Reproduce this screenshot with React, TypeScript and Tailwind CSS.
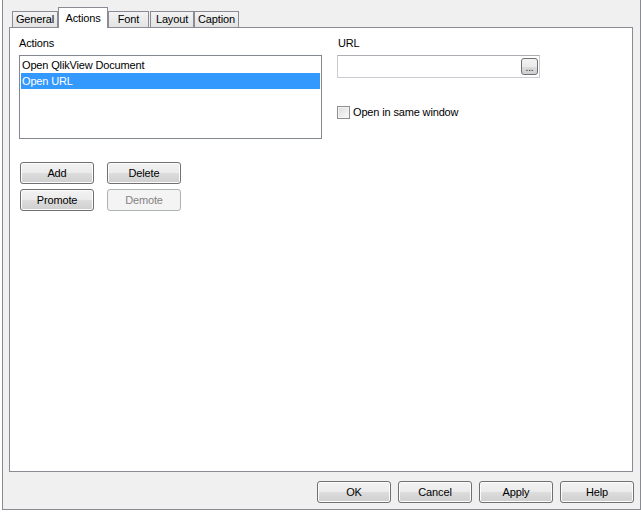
import React from 'react';

const btnBase =
  'w-[74px] h-[22px] rounded-[3px] border flex items-center justify-center text-[11px] leading-none';
const btnOn =
  'border-[#707070] text-black bg-[linear-gradient(to_bottom,#f2f2f2_0%,#ebebeb_50%,#dddddd_50%,#cfcfcf_100%)] shadow-[inset_0_0_0_1px_#fcfcfc]';
const btnOff = 'border-[#adb2b5] text-[#838383] bg-[#f4f4f4]';

const WinButton: React.FC<{ label: string; disabled?: boolean }> = ({ label, disabled }) => (
  <button className={`${btnBase} ${disabled ? btnOff : btnOn}`} disabled={disabled}>
    {label}
  </button>
);

const tabs = [
  { label: 'General', w: 'w-[46px]' },
  { label: 'Actions', w: 'w-[50px]', active: true },
  { label: 'Font', w: 'w-[41px]' },
  { label: 'Layout', w: 'w-[44px] ml-[1px]' },
  { label: 'Caption', w: 'w-[45px]' },
];

export default function App() {
  return (
    <div className="w-[641px] h-[514px] bg-white font-['Liberation_Sans',Arial,sans-serif] text-[11px] tracking-[-0.15px] text-black">
      <div className="ml-[2px] w-[639px] h-[510px] bg-[#f0f0f0] border-x border-b border-[#888b91] flex flex-col pl-[6px]">
        {/* Tab strip */}
        <div className="h-[27px] flex items-end pl-[3px]">
          {tabs.map((t) =>
            t.active ? (
              <div
                key={t.label}
                className={`${t.w} h-[21px] -mb-px relative z-10 bg-white border-x border-t border-[#898c95] flex items-center justify-center`}
              >
                {t.label}
              </div>
            ) : (
              <div
                key={t.label}
                className={`${t.w} h-[16px] border-x border-t border-[#898c95] bg-linear-to-b from-[#f3f3f3] to-[#e3e3e3] flex items-center justify-center`}
              >
                {t.label}
              </div>
            )
          )}
        </div>

        {/* Tab panel */}
        <div className="w-[624px] h-[445px] bg-white border border-[#898c95] pt-[9px] pl-[9px] flex gap-[15px]">
          {/* Left column */}
          <div className="w-[303px] flex flex-col">
            <div className="h-[13px] leading-[13px]">Actions</div>
            <div className="mt-[5px] h-[84px] border border-[#828790] bg-white pt-[1px] px-[1px]">
              <div className="h-[16px] leading-[16px] pl-[1px]">Open QlikView Document</div>
              <div className="h-[16px] leading-[16px] pl-[1px] bg-[#3399ff] text-white">Open URL</div>
            </div>
            <div className="mt-[23px] ml-[1px] flex flex-col gap-[5px]">
              <div className="flex gap-[13px]">
                <WinButton label="Add" />
                <WinButton label="Delete" />
              </div>
              <div className="flex gap-[13px]">
                <WinButton label="Promote" />
                <WinButton label="Demote" disabled />
              </div>
            </div>
          </div>

          {/* Right column */}
          <div className="flex flex-col">
            <div className="h-[13px] leading-[13px] pl-[1px]">URL</div>
            <div className="mt-[5px] w-[203px] h-[23px] border border-[#c9ccd2] border-t-[#abadb3] bg-white flex items-center justify-end pr-[1px]">
              <div className="w-[17px] h-[17px] rounded-[3px] border border-[#707070] bg-[linear-gradient(to_bottom,#f2f2f2_0%,#ebebeb_50%,#dddddd_50%,#cfcfcf_100%)] flex items-end justify-center pb-[1px] text-[10px] leading-[10px] text-[#222]">
                ...
              </div>
            </div>
            <div className="mt-[28px] flex items-center gap-[3px]">
              <div className="w-[13px] h-[13px] border border-[#8e8f8f] bg-linear-to-br from-[#dcdcdc] to-[#fafafa] shadow-[inset_0_0_0_1px_#f4f4f4]" />
              <span className="leading-[13px]">Open in same window</span>
            </div>
          </div>
        </div>

        {/* Dialog buttons */}
        <div className="mt-[9px] flex justify-end gap-[7px] pr-[6px]">
          <WinButton label="OK" />
          <WinButton label="Cancel" />
          <WinButton label="Apply" />
          <WinButton label="Help" />
        </div>
      </div>
    </div>
  );
}
